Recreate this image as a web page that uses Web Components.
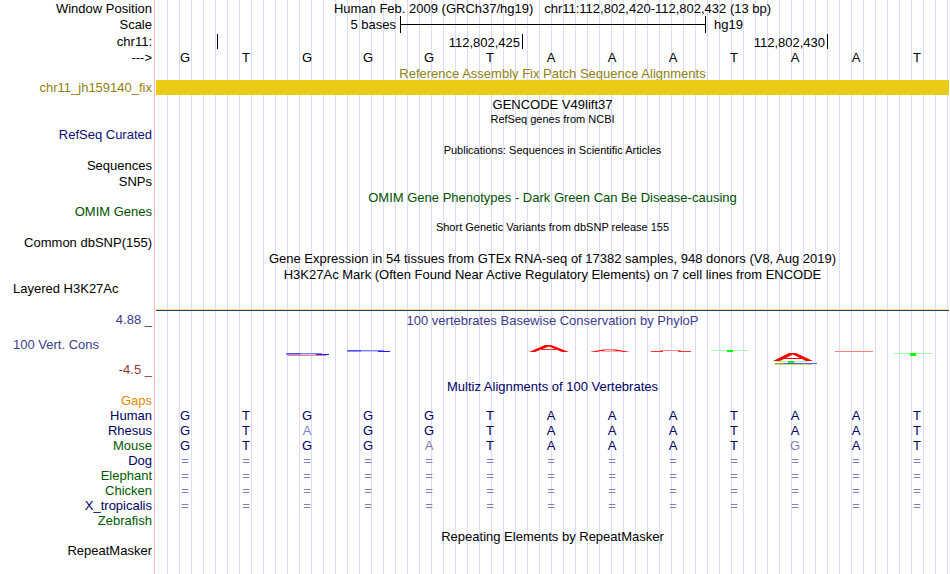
<!DOCTYPE html>
<html lang="en">
<head>
<meta charset="utf-8">
<title>Genome Browser</title>
<style>
  body {
    margin: 0;
    background: #fff;
    color: #000;
    font-family: "Liberation Sans", Arial, Helvetica, sans-serif;
    font-size: 13px;
  }
</style>
</head>
<body>
<genome-browser></genome-browser>

<script>
// One line of the image: a label on the left, track content on the right.
class TrackRow extends HTMLElement {
  constructor() {
    super();
    this.attachShadow({ mode: 'open' });
    this.shadowRoot.innerHTML = `
      <style>
        :host {
          display: grid;
          grid-template-columns: 156px minmax(0, 1fr);
          height: 15px;
          line-height: 15px;
          white-space: nowrap;
        }
        :host([size="tall"]) { height: 16px; line-height: 17px; }
        :host([size="title"]) { line-height: 17px; }
        :host([size="ruler"]) { height: 17px; line-height: 17px; }
        :host([size="wiggle"]) { height: 68px; }
        :host([size="signal"]) { height: 29px; }
        .label {
          padding-right: 4px;
          text-align: right;
        }
        :host([align="left"]) .label {
          padding-left: 13px;
          text-align: left;
        }
        .content {
          text-align: center;
        }
        :host([small]) .content { font-size: 11px; }
      </style>
      <div class="label"><slot name="label"></slot></div>
      <div class="content"><slot></slot></div>
    `;
  }
}

// Letters spread over equal columns. Lower case is drawn as a mismatch.
class BaseLetters extends HTMLElement {
  constructor() {
    super();
    this.attachShadow({ mode: 'open' });
  }

  connectedCallback() {
    const cells = [...this.getAttribute('seq')].map(base => {
      const dim = base === '=' || base !== base.toUpperCase();
      return `<span class="${dim ? 'dim' : ''}">${base.toUpperCase()}</span>`;
    });
    this.shadowRoot.innerHTML = `
      <style>
        :host {
          display: grid;
          grid-template-columns: repeat(13, 1fr);
        }
        span { padding-right: 3px; }
        .dim { color: #8080b8; }
      </style>
      ${cells.join('')}
    `;
  }
}

class ScaleBar extends HTMLElement {
  constructor() {
    super();
    this.attachShadow({ mode: 'open' });
    this.shadowRoot.innerHTML = `
      <style>
        :host {
          display: grid;
          grid-template-columns: 4fr 5fr 4fr;
          height: 17px;
        }
        .from { text-align: right; padding-right: 4px; }
        .to { text-align: left; padding-left: 9px; }
        .bar {
          display: flex;
          align-items: center;
          border: solid #000;
          border-width: 0 1px;
          margin-right: -1px;
        }
        .bar::before {
          content: "";
          flex: 1;
          height: 1px;
          background: #000;
        }
      </style>
      <span class="from"><slot name="from"></slot></span>
      <span class="bar"></span>
      <span class="to"><slot name="to"></slot></span>
    `;
  }
}

class RulerTicks extends HTMLElement {
  constructor() {
    super();
    this.attachShadow({ mode: 'open' });
    this.shadowRoot.innerHTML = `
      <style>
        :host {
          display: grid;
          grid-template-columns: 1fr 5fr 5fr 2fr;
          height: 17px;
        }
        span {
          height: 15px;
          padding-right: 2px;
          margin: 1px -1px 0 0;
          border-right: 1px solid #000;
          text-align: right;
        }
      </style>
      <span></span>
      <span><slot name="first"></slot></span>
      <span><slot name="second"></slot></span>
    `;
  }
}

// Conservation logo, letters flattened to their score.
class PhyloLogo extends HTMLElement {
  constructor() {
    super();
    this.attachShadow({ mode: 'open' });
    this.shadowRoot.innerHTML = `
      <style>
        :host { display: block; }
        svg { display: block; width: 100%; height: 50px; }
      </style>
      <svg viewBox="156 328 793 50" preserveAspectRatio="none" fill="none" aria-hidden="true">
        <path d="M287 353.5H322" stroke="#8080ff"/>
        <path d="M286 354H301M314 354.5H329" stroke="#2020ff"/>
        <path d="M301 354.5H316" stroke="#c8c8ff"/>
        <path d="M288 355.5H326" stroke="#ff8080"/>
        <path d="M348 350.5H384" stroke="#8080ff"/>
        <path d="M347 351H361M377 351.5H390" stroke="#2020ff"/>
        <path d="M361 351.5H378" stroke="#c8c8ff"/>
        <path fill="#f00" d="M529 352L545 345H551L569 352H562L549 346.500L535 352Z"/>
        <path d="M539 349.5H558" stroke="#ff3030"/>
        <path fill="#f00" d="M590 352L603 349.500H616L630 352H624L612 350.200H606L596 352Z"/>
        <path d="M602 351.5H618" stroke="#ffb0b0"/>
        <path d="M651 351.500H663M678 351.500H691" stroke="#ff3030"/>
        <path d="M660 350.500H681" stroke="#ff8080"/>
        <path d="M711 350.500H748" stroke="#a0ffa0"/>
        <path fill="#0f0" d="M727 350H733V352H727Z"/>
        <path fill="#f00" d="M773 361L789 353H796L813 361H806L793 354.500L780 361Z"/>
        <path d="M784 358.500H802" stroke="#f00"/>
        <path d="M776 361.500H809" stroke="#a0ffa0"/>
        <path fill="#0f0" d="M788 361H794V363H788Z"/>
        <path d="M775 363.500H817" stroke="#6060f0"/>
        <path d="M775 364.500H812" stroke="#d0d070"/>
        <path d="M775 363.500H784" stroke="#a0a030"/>
        <path d="M835 351.500H873" stroke="#ff8080"/>
        <path d="M894 353.500H932" stroke="#a0ffa0"/>
        <path fill="#0f0" d="M910 353H916V356H910Z"/>
      </svg>
    `;
  }
}

class GenomeBrowser extends HTMLElement {
  constructor() {
    super();
    this.attachShadow({ mode: 'open' });
    this.shadowRoot.innerHTML = `
      <style>
        :host {
          --guide: #dcdcf8;
          --edge: #ffb0b0;
          display: block;
          min-height: 100vh;
          padding-right: 1px;
          box-sizing: border-box;
          background:
            linear-gradient(var(--edge), var(--edge)) 154px 0 / 1px 100% no-repeat,
            repeating-linear-gradient(90deg, transparent 0 11px, var(--guide) 11px 12px) 156px 0 no-repeat;
        }
        .patch { color: #908010; }
        .patch-bar { height: 15px; background: #e8cc18; }
        .gencode { margin-top: 1px; }
        .refseq { color: #0c0c78; }
        .omim { color: #005000; }
        .signal-line {
          height: 1px;
          margin-top: 28px;
          border-top: 1px solid #ffd890;
          background: #204060;
        }
        .cons { color: #3c3c8c; }
        .scale {
          display: flex;
          flex-direction: column;
          justify-content: space-between;
          height: 65px;
          padding-top: 2px;
        }
        .scale .name { text-align: left; padding-left: 13px; }
        .wiggle-title { height: 15px; padding-top: 3px; }
        .low { color: #8c3c3c; }
        .gaps { color: #e68a00; }
        .multiz, .navy { color: #000064; }
        .green { color: #005a00; }
      </style>

      <track-row size="tall">
        <span slot="label">Window Position</span>
        Human Feb. 2009 (GRCh37/hg19) &nbsp; chr11:112,802,420-112,802,432 (13 bp)
      </track-row>
      <track-row size="ruler">
        <span slot="label">Scale</span>
        <scale-bar><span slot="from">5 bases</span><span slot="to">hg19</span></scale-bar>
      </track-row>
      <track-row size="ruler">
        <span slot="label">chr11:</span>
        <ruler-ticks><span slot="first">112,802,425</span><span slot="second">112,802,430</span></ruler-ticks>
      </track-row>
      <track-row><span slot="label">---&gt;</span><base-letters seq="GTGGGTAAATAAT"></base-letters></track-row>

      <track-row class="patch" size="title">Reference Assembly Fix Patch Sequence Alignments</track-row>
      <track-row class="patch"><span slot="label">chr11_jh159140_fix</span><div class="patch-bar"></div></track-row>

      <track-row class="gencode" size="tall">GENCODE V49lift37</track-row>
      <track-row small>RefSeq genes from NCBI</track-row>
      <track-row class="refseq"><span slot="label">RefSeq Curated</span></track-row>
      <track-row size="tall" small>Publications: Sequences in Scientific Articles</track-row>
      <track-row><span slot="label">Sequences</span></track-row>
      <track-row size="tall"><span slot="label">SNPs</span></track-row>
      <track-row class="omim" size="title">OMIM Gene Phenotypes - Dark Green Can Be Disease-causing</track-row>
      <track-row class="omim"><span slot="label">OMIM Genes</span></track-row>
      <track-row size="tall" small>Short Genetic Variants from dbSNP release 155</track-row>
      <track-row><span slot="label">Common dbSNP(155)</span></track-row>
      <track-row size="tall">Gene Expression in 54 tissues from GTEx RNA-seq of 17382 samples, 948 donors (V8, Aug 2019)</track-row>
      <track-row size="title">H3K27Ac Mark (Often Found Near Active Regulatory Elements) on 7 cell lines from ENCODE</track-row>
      <track-row size="signal" align="left"><span slot="label">Layered H3K27Ac</span><div class="signal-line"></div></track-row>

      <track-row class="cons" size="wiggle">
        <div class="scale" slot="label">
          <span>4.88 _</span>
          <span class="name">100 Vert. Cons</span>
          <span class="low">-4.5 _</span>
        </div>
        <div class="wiggle-title">100 vertebrates Basewise Conservation by PhyloP</div>
        <phylo-logo></phylo-logo>
      </track-row>

      <track-row class="multiz" size="title">Multiz Alignments of 100 Vertebrates</track-row>
      <track-row class="gaps"><span slot="label">Gaps</span></track-row>
      <track-row class="navy"><span slot="label">Human</span><base-letters seq="GTGGGTAAATAAT"></base-letters></track-row>
      <track-row class="navy"><span slot="label">Rhesus</span><base-letters seq="GTaGGTAAATAAT"></base-letters></track-row>
      <track-row class="navy"><span slot="label" class="green">Mouse</span><base-letters seq="GTGGaTAAATgAT"></base-letters></track-row>
      <track-row class="navy"><span slot="label">Dog</span><base-letters seq="============="></base-letters></track-row>
      <track-row class="navy"><span slot="label" class="green">Elephant</span><base-letters seq="============="></base-letters></track-row>
      <track-row class="navy"><span slot="label" class="green">Chicken</span><base-letters seq="============="></base-letters></track-row>
      <track-row class="navy"><span slot="label">X_tropicalis</span><base-letters seq="============="></base-letters></track-row>
      <track-row class="green"><span slot="label">Zebrafish</span></track-row>

      <track-row size="title">Repeating Elements by RepeatMasker</track-row>
      <track-row><span slot="label">RepeatMasker</span></track-row>
    `;
  }
}

customElements.define('track-row', TrackRow);
customElements.define('base-letters', BaseLetters);
customElements.define('scale-bar', ScaleBar);
customElements.define('ruler-ticks', RulerTicks);
customElements.define('phylo-logo', PhyloLogo);
customElements.define('genome-browser', GenomeBrowser);
</script>
</body>
</html>
